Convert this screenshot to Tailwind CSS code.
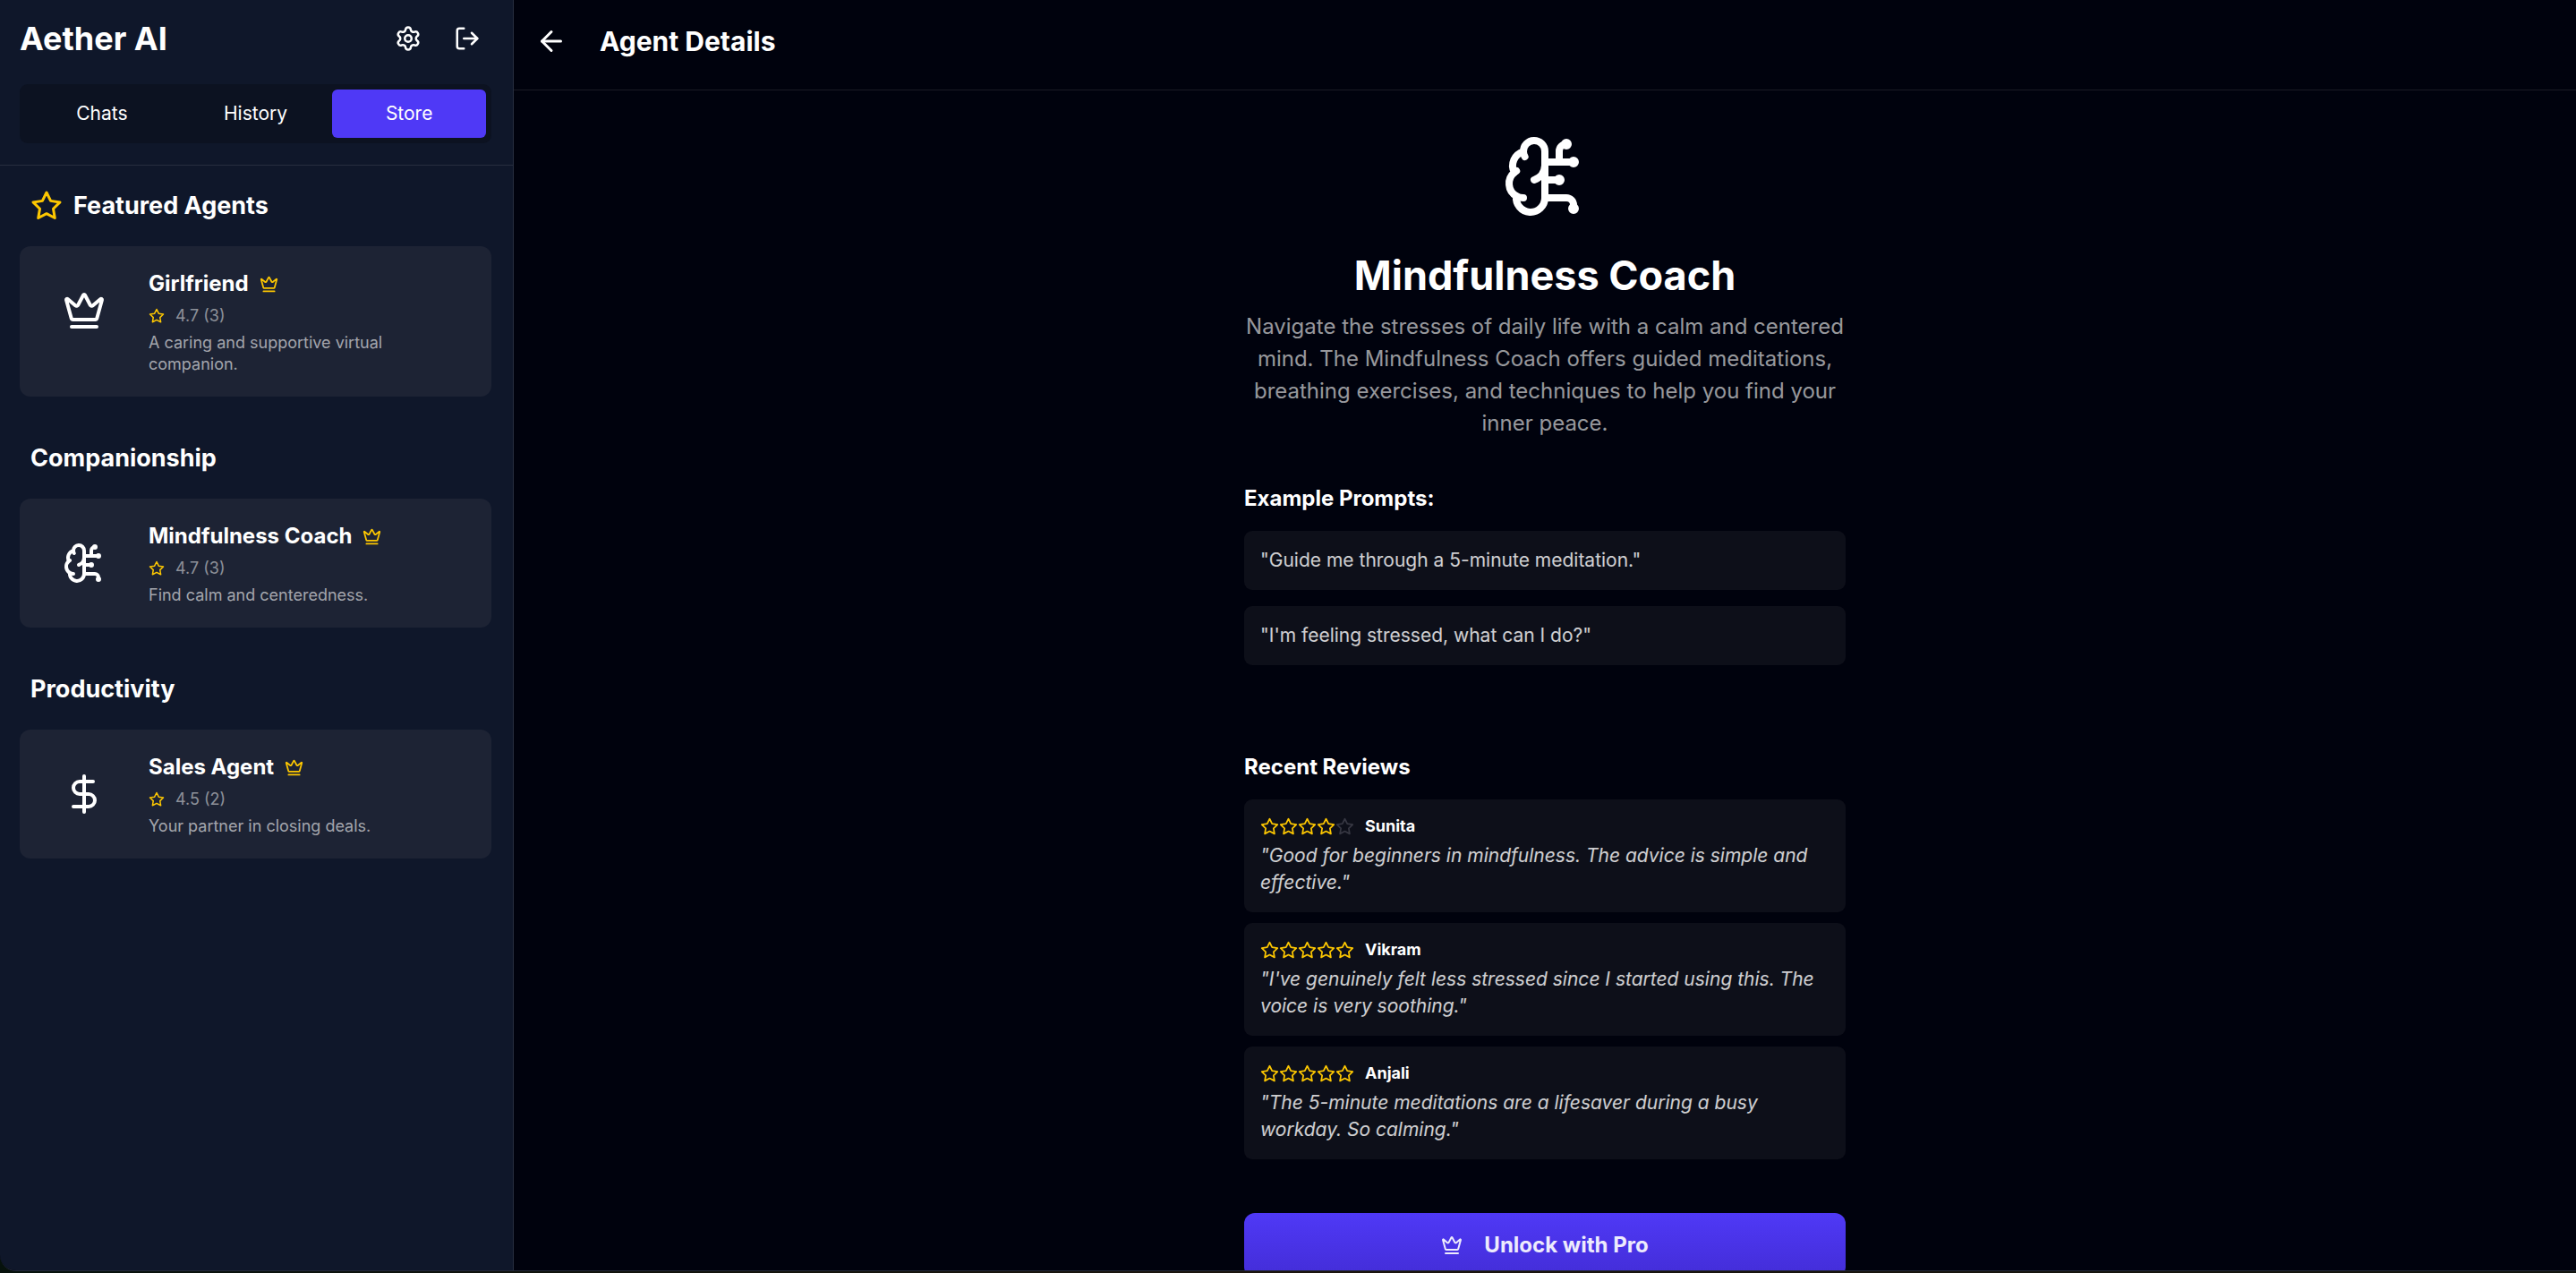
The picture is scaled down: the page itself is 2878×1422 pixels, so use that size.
<!DOCTYPE html>
<html lang="en">
<head>
<meta charset="utf-8">
<title>Aether AI – Agent Details</title>
<script src="https://cdn.jsdelivr.net/npm/@tailwindcss/browser@4"></script>
</head>
<body class="h-screen overflow-hidden bg-linear-to-r from-[#06120c] via-[#1c140e] to-[#12140e] pb-[2px] font-['Inter',sans-serif] text-[24px] leading-[36px] text-white">
<svg class="hidden" aria-hidden="true">
  <defs>
    <symbol id="crown" viewBox="0 0 24 24"><path d="M11.562 3.266a.5.5 0 0 1 .876 0L15.39 8.87a1 1 0 0 0 1.516.294L21.183 5.5a.5.5 0 0 1 .798.519l-2.834 10.246a1 1 0 0 1-.956.734H5.81a1 1 0 0 1-.957-.734L2.02 6.02a.5.5 0 0 1 .798-.519l4.276 3.664a1 1 0 0 0 1.516-.294z"/><path d="M5 21h14"/></symbol>
    <symbol id="brain" viewBox="0 0 24 24"><path d="M12 5a3 3 0 1 0-5.997.125 4 4 0 0 0-2.526 5.77 4 4 0 0 0 .556 6.588A4 4 0 1 0 12 18Z"/><path d="M9 13a4.5 4.5 0 0 0 3-4"/><path d="M6.003 5.125A3 3 0 0 0 6.401 6.5"/><path d="M3.477 10.896a4 4 0 0 1 .585-.396"/><path d="M6 18a4 4 0 0 1-1.967-.516"/><path d="M12 13h4"/><path d="M12 18h6a2 2 0 0 1 2 2v1"/><path d="M12 8h8"/><path d="M16 8V5a2 2 0 0 1 2-2"/><circle cx="16" cy="13" r=".5"/><circle cx="18" cy="3" r=".5"/><circle cx="20" cy="21" r=".5"/><circle cx="20" cy="8" r=".5"/></symbol>
    <symbol id="dollar" viewBox="0 0 24 24"><path d="M12 2v20"/><path d="M17 5H9.5a3.5 3.5 0 0 0 0 7h5a3.5 3.5 0 0 1 0 7H6"/></symbol>
    <symbol id="star" viewBox="0 0 24 24"><path d="M12 2l3.09 6.26L22 9.27l-5 4.87 1.18 6.88L12 17.77l-6.18 3.25L7 14.14 2 9.27l6.91-1.01z"/></symbol>
  </defs>
</svg>
<div class="flex h-full overflow-hidden rounded-bl-[18px] border-b border-[#232838] bg-[#00020d]">

  <aside class="flex w-[574px] shrink-0 flex-col border-r border-[#272e3f] bg-[#0f172a]">
    <header class="flex flex-col gap-[24px] border-b border-[#272e3f] pt-[16px] pr-[24px] pb-[24px] pl-[22px]">
      <div class="flex items-center justify-between">
        <h1 class="text-[36px] leading-[48px] font-bold">Aether AI</h1>
        <div class="flex gap-[12px]">
          <button type="button" aria-label="Settings" class="flex size-[54px] items-center justify-center">
            <svg class="size-[30px] fill-none stroke-current stroke-2" viewBox="0 0 24 24" stroke-linecap="round" stroke-linejoin="round"><path d="M9.671 4.136a2.34 2.34 0 0 1 4.659 0 2.34 2.34 0 0 0 3.319 1.915 2.34 2.34 0 0 1 2.33 4.033 2.34 2.34 0 0 0 0 3.831 2.34 2.34 0 0 1-2.33 4.033 2.34 2.34 0 0 0-3.319 1.915 2.34 2.34 0 0 1-4.659 0 2.34 2.34 0 0 0-3.32-1.915 2.34 2.34 0 0 1-2.33-4.033 2.34 2.34 0 0 0 0-3.831A2.34 2.34 0 0 1 6.35 6.051a2.34 2.34 0 0 0 3.319-1.915"/><circle cx="12" cy="12" r="3"/></svg>
          </button>
          <button type="button" aria-label="Log out" class="flex size-[54px] items-center justify-center">
            <svg class="size-[30px] fill-none stroke-current stroke-2" viewBox="0 0 24 24" stroke-linecap="round" stroke-linejoin="round"><path d="M9 21H5a2 2 0 0 1-2-2V5a2 2 0 0 1 2-2h4"/><path d="m16 17 5-5-5-5"/><path d="M21 12H9"/></svg>
          </button>
        </div>
      </div>
      <nav class="grid grid-cols-3 rounded-[9px] bg-[#0c1221] p-[6px] text-[21px] leading-[30px]">
        <button type="button" class="rounded-[6px] py-[12px]">Chats</button>
        <button type="button" class="rounded-[6px] py-[12px]">History</button>
        <button type="button" class="rounded-[6px] bg-indigo-600 py-[12px]">Store</button>
      </nav>
    </header>

    <div class="flex flex-col gap-[48px] pt-[24px] pr-[24px] pl-[22px]">
      <section class="flex flex-col gap-[24px]">
        <h2 class="flex items-center gap-[12px] px-[12px] text-[27px] leading-[42px] font-bold"><svg class="size-[36px] fill-none stroke-yellow-400 stroke-2" stroke-linecap="round" stroke-linejoin="round"><use href="#star"/></svg>Featured Agents</h2>
        <a href="#girlfriend" class="flex items-start gap-[24px] rounded-[12px] bg-[#1d2334] p-[24px]">
          <span class="flex size-[96px] shrink-0 items-center justify-center"><svg class="size-[48px] fill-none stroke-white stroke-2" stroke-linecap="round" stroke-linejoin="round"><use href="#crown"/></svg></span>
          <div class="min-w-0 flex-1">
            <h3 class="flex items-center gap-[12px] font-bold">Girlfriend<svg class="size-[21px] fill-none stroke-yellow-400 stroke-2" stroke-linecap="round" stroke-linejoin="round"><use href="#crown"/></svg></h3>
            <p class="flex items-center gap-[12px] py-[6px] text-[18px] leading-[24px] text-white/50"><svg class="size-[18px] fill-none stroke-yellow-400 stroke-2" stroke-linecap="round" stroke-linejoin="round"><use href="#star"/></svg>4.7 (3)</p>
            <p class="text-[18px] leading-[24px] text-white/60">A caring and supportive virtual companion.</p>
          </div>
        </a>
      </section>

      <section class="flex flex-col gap-[24px]">
        <h2 class="px-[12px] text-[27px] leading-[42px] font-bold">Companionship</h2>
        <a href="#mindfulness-coach" class="flex items-start gap-[24px] rounded-[12px] bg-[#1d2334] p-[24px]">
          <span class="flex size-[96px] shrink-0 items-center justify-center"><svg class="size-[48px] fill-none stroke-white stroke-2" stroke-linecap="round" stroke-linejoin="round"><use href="#brain"/></svg></span>
          <div class="min-w-0 flex-1">
            <h3 class="flex items-center gap-[12px] font-bold">Mindfulness Coach<svg class="size-[21px] fill-none stroke-yellow-400 stroke-2" stroke-linecap="round" stroke-linejoin="round"><use href="#crown"/></svg></h3>
            <p class="flex items-center gap-[12px] py-[6px] text-[18px] leading-[24px] text-white/50"><svg class="size-[18px] fill-none stroke-yellow-400 stroke-2" stroke-linecap="round" stroke-linejoin="round"><use href="#star"/></svg>4.7 (3)</p>
            <p class="text-[18px] leading-[24px] text-white/60">Find calm and centeredness.</p>
          </div>
        </a>
      </section>

      <section class="flex flex-col gap-[24px]">
        <h2 class="px-[12px] text-[27px] leading-[42px] font-bold">Productivity</h2>
        <a href="#sales-agent" class="flex items-start gap-[24px] rounded-[12px] bg-[#1d2334] p-[24px]">
          <span class="flex size-[96px] shrink-0 items-center justify-center"><svg class="size-[48px] fill-none stroke-white stroke-2" stroke-linecap="round" stroke-linejoin="round"><use href="#dollar"/></svg></span>
          <div class="min-w-0 flex-1">
            <h3 class="flex items-center gap-[12px] font-bold">Sales Agent<svg class="size-[21px] fill-none stroke-yellow-400 stroke-2" stroke-linecap="round" stroke-linejoin="round"><use href="#crown"/></svg></h3>
            <p class="flex items-center gap-[12px] py-[6px] text-[18px] leading-[24px] text-white/50"><svg class="size-[18px] fill-none stroke-yellow-400 stroke-2" stroke-linecap="round" stroke-linejoin="round"><use href="#star"/></svg>4.5 (2)</p>
            <p class="text-[18px] leading-[24px] text-white/60">Your partner in closing deals.</p>
          </div>
        </a>
      </section>
    </div>
  </aside>

  <main class="flex min-w-0 flex-1 flex-col">
    <header class="flex items-center gap-[24px] border-b border-[#1a1b25] px-[12px] pt-[16px] pb-[24px]">
      <button type="button" aria-label="Back" class="flex size-[60px] items-center justify-center">
        <svg class="size-[36px] fill-none stroke-current stroke-2" viewBox="0 0 24 24" stroke-linecap="round" stroke-linejoin="round"><path d="m12 19-7-7 7-7"/><path d="M19 12H5"/></svg>
      </button>
      <h2 class="text-[30px] leading-[42px] font-bold">Agent Details</h2>
    </header>

    <div class="min-h-0 flex-1 overflow-hidden p-[48px]">
      <div class="mx-auto max-w-[672px]">
        <div class="flex flex-col items-center text-center">
          <svg class="size-[96px] fill-none stroke-white stroke-2" stroke-linecap="round" stroke-linejoin="round"><use href="#brain"/></svg>
          <h1 class="mt-[36px] text-[45px] leading-[54px] font-bold">Mindfulness Coach</h1>
          <p class="mt-[12px] text-white/60">Navigate the stresses of daily life with a calm and centered mind. The Mindfulness Coach offers guided meditations, breathing exercises, and techniques to help you find your inner peace.</p>
        </div>

        <section class="mt-[48px]">
          <h3 class="font-bold">Example Prompts:</h3>
          <ul class="mt-[18px] flex flex-col gap-[18px] text-[21px] leading-[30px] text-white/80">
            <li class="rounded-[9px] bg-[#0d0f19] p-[18px]">"Guide me through a 5-minute meditation."</li>
            <li class="rounded-[9px] bg-[#0d0f19] p-[18px]">"I'm feeling stressed, what can I do?"</li>
          </ul>
        </section>

        <section class="mt-[96px]">
          <h3 class="font-bold">Recent Reviews</h3>
          <div id="reviews" class="mt-[18px] flex flex-col gap-[12px]"></div>
        </section>

        <button type="button" class="mt-[60px] flex h-[72px] w-full items-center justify-center gap-[24px] rounded-[12px] bg-linear-to-b from-[#4f39f6] to-[#432dd7] font-bold text-white/90">
          <svg class="size-[24px] fill-none stroke-current stroke-2" stroke-linecap="round" stroke-linejoin="round"><use href="#crown"/></svg>Unlock with Pro
        </button>
      </div>
    </div>
  </main>
</div>

<template id="review">
  <article class="rounded-[9px] bg-[#0d0f19] p-[18px]">
    <div class="flex h-[24px] items-center gap-[12px]">
      <div class="flex" data-stars></div>
      <h4 class="text-[18px] leading-[24px] font-bold"></h4>
    </div>
    <p class="mt-[6px] text-[21px] leading-[30px] text-white/80 italic"></p>
  </article>
</template>
<template id="star-on"><svg class="size-[21px] fill-none stroke-yellow-400 stroke-2" stroke-linecap="round" stroke-linejoin="round"><use href="#star"/></svg></template>
<template id="star-off"><svg class="size-[21px] fill-none stroke-[#363742] stroke-2" stroke-linecap="round" stroke-linejoin="round"><use href="#star"/></svg></template>
<script>
  const reviews = [
    { name: 'Sunita', stars: 4, text: '"Good for beginners in mindfulness. The advice is simple and effective."' },
    { name: 'Vikram', stars: 5, text: '"I\'ve genuinely felt less stressed since I started using this. The voice is very soothing."' },
    { name: 'Anjali', stars: 5, text: '"The 5-minute meditations are a lifesaver during a busy workday. So calming."' },
  ];
  const copy = id => document.getElementById(id).content.cloneNode(true);
  for (const r of reviews) {
    const card = copy('review');
    for (let i = 0; i < 5; i++) card.querySelector('[data-stars]').append(copy(i < r.stars ? 'star-on' : 'star-off'));
    card.querySelector('h4').textContent = r.name;
    card.querySelector('p').textContent = r.text;
    document.getElementById('reviews').append(card);
  }
</script>
</body>
</html>
